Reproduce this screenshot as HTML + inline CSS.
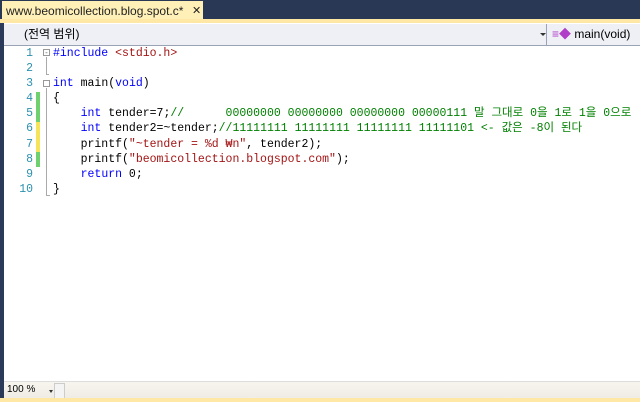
<!DOCTYPE html><html><head><meta charset="utf-8"><style>
body{margin:0;width:640px;height:402px;overflow:hidden;background:#2b3a58;position:relative;font-family:"Liberation Sans","Noto Sans CJK KR",sans-serif}
.top{position:absolute;left:0;top:0;width:640px;height:20px;background:#293955}
.tab{position:absolute;left:2px;top:1px;width:201px;height:19px;background:#fff0b8;font-size:12px;line-height:20px;color:#222;padding-left:4px;box-sizing:border-box}
.tab span{position:absolute;left:190px;top:0;font-size:11px}
.yl{position:absolute;left:0;top:19px;width:640px;height:4px;background:#ffe8a6}
.main{position:absolute;left:4px;top:23px;width:636px;height:375px;background:#fff}
.bar{position:absolute;left:0;top:1px;width:636px;height:21px;background:#eef0f6;border-bottom:1px solid #9aa3b5;font-size:12px;line-height:20px}
.bar .a{position:absolute;left:20px}
.bar .sep{position:absolute;left:221px;top:0;width:1px;height:21px;background:#9aa3b5}
.bar .dd{position:absolute;left:214px;top:9px;border-left:3px solid transparent;border-right:3px solid transparent;border-top:3px solid #333}
.bar .b{position:absolute;left:244px}
pre{margin:0;position:absolute;left:49px;top:23px;font-family:"Liberation Mono","Noto Sans CJK KR",monospace;font-size:11.5px;line-height:15.1px;color:#000}
.num{position:absolute;left:0;top:23px;width:29px;text-align:right;font-family:"Liberation Mono",monospace;font-size:11.5px;line-height:15.1px;color:#2b91af}
.k{color:#00f}.s{color:#a31515}.c{color:#008000}.p{color:#a31515}
.st{position:absolute;left:0;top:358px;width:636px;height:17px;background:linear-gradient(#f7f5ee,#eeece4);border-top:1px solid #ddd}
.yb{position:absolute;left:0;top:398px;width:640px;height:4px;background:#ffe8a6}
</style></head><body>
<div class="top"></div>
<div class="tab">www.beomicollection.blog.spot.c*<span>✕</span></div>
<div class="yl"></div>
<div class="main">
<div class="bar"><span class="a">(전역 범위)</span><i class="dd" style="left:536px"></i><i class="sep" style="left:542px"></i><span class="b" style="left:548px"><span style="color:#b03cc8">≡◆</span> main(void)</span></div>
<div class="num">1<br>2<br>3<br>4<br>5<br>6<br>7<br>8<br>9<br>10</div>
<div style="position:absolute;left:32px;top:69px;width:4px;height:30px;background:#6fd06f"></div>
<div style="position:absolute;left:32px;top:99px;width:4px;height:30px;background:#f5e35a"></div>
<div style="position:absolute;left:32px;top:129px;width:4px;height:15px;background:#6fd06f"></div>
<div style="position:absolute;left:39px;top:26px;width:7px;height:7px;border:1px solid #999;box-sizing:border-box;font-size:8px;line-height:5px;text-align:center;color:#666">-</div>
<div style="position:absolute;left:42px;top:34px;width:1px;height:18px;background:#aaa"></div>
<div style="position:absolute;left:42px;top:51px;width:3px;height:1px;background:#aaa"></div>
<div style="position:absolute;left:39px;top:57px;width:7px;height:7px;border:1px solid #999;box-sizing:border-box"></div>
<div style="position:absolute;left:42px;top:65px;width:1px;height:108px;background:#aaa"></div>
<div style="position:absolute;left:42px;top:172px;width:4px;height:1px;background:#aaa"></div>
<pre><span class="k">#include</span> <span class="s">&lt;stdio.h&gt;</span>

<span class="k">int</span> main(<span class="k">void</span>)
{
    <span class="k">int</span> tender=7;<span class="c">//      00000000 00000000 00000000 00000111 말 그대로 0을 1로 1을 0으로</span>
    <span class="k">int</span> tender2=~tender;<span class="c">//11111111 11111111 11111111 11111101 &lt;- 값은 -8이 된다</span>
    printf(<span class="s">"~tender = %d ₩n"</span>, tender2);
    printf(<span class="s">"beomicollection.blogspot.com"</span>);
    <span class="k">return</span> 0;
}</pre>
<div class="st"><span style="position:absolute;left:3px;top:2px;font-size:10px">100 %</span><i style="position:absolute;left:45px;top:8px;border-left:2px solid transparent;border-right:2px solid transparent;border-top:3px solid #333"></i><i style="position:absolute;left:50px;top:1px;width:9px;height:14px;border:1px solid #ccc;background:#f4f4f4"></i></div>
</div>
<div class="yb"></div>
</body></html>
